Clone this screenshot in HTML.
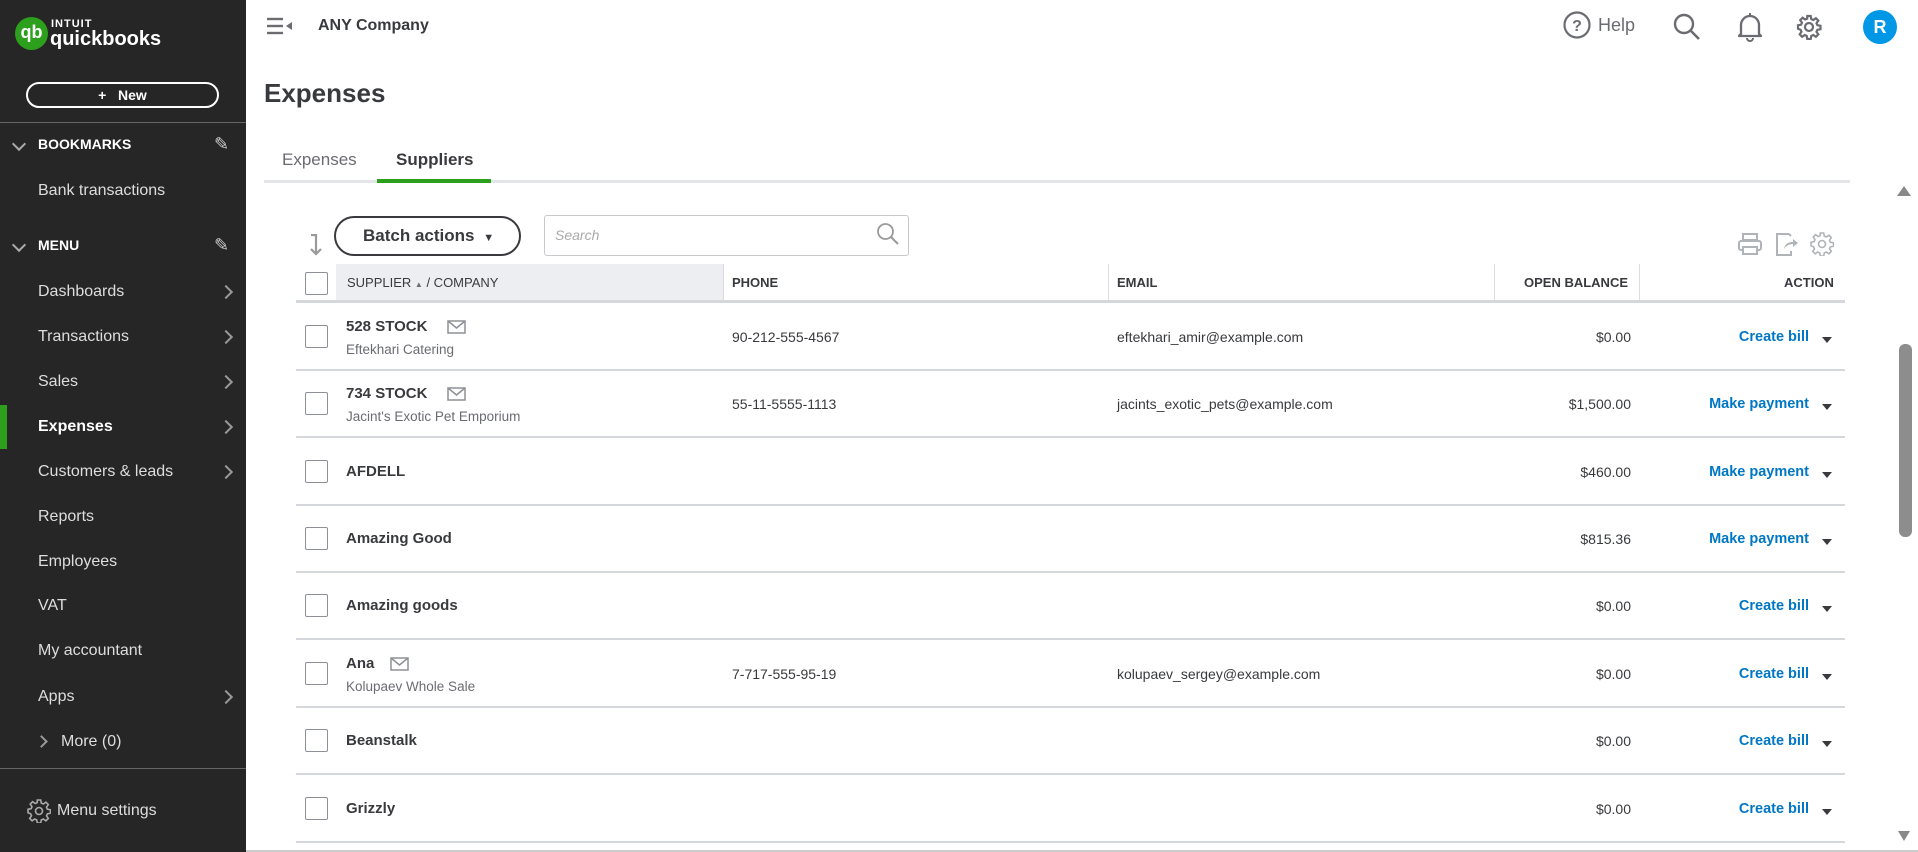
<!DOCTYPE html>
<html><head><meta charset="utf-8"><style>
*{box-sizing:border-box;margin:0;padding:0}
body{width:1918px;height:852px;overflow:hidden;background:#fff;font-family:"Liberation Sans",sans-serif;color:#393a3d;position:relative}
.sb{position:absolute;left:0;top:0;width:246px;height:852px;background:#262626;color:#e8e8e8}
.sb .it{position:absolute;left:38px;font-size:16px;color:#ddd}
.chev{position:absolute;left:221px;width:10px;height:10px;border-right:2px solid #999;border-top:2px solid #999;transform:rotate(45deg)}
.a{position:absolute}
.row{position:absolute;left:296px;width:1549px;height:68px;border-bottom:2px solid #d4d7dc}
.cb{position:absolute;left:9px;width:23px;height:23px;border:1px solid #8d9096;border-radius:2px;background:#fff}
.nm{position:absolute;left:50px;font-size:15px;font-weight:bold;color:#393a3d}
.co{position:absolute;left:50px;font-size:13.5px;color:#6b6c72}
.ph{position:absolute;left:436px;font-size:14px}
.em{position:absolute;left:821px;font-size:14px}
.bal{position:absolute;right:214px;font-size:14px;text-align:right}
.act{position:absolute;right:36px;font-size:14.5px;font-weight:bold;color:#0077c5}
.tri{position:absolute;right:13px;width:0;height:0;border-left:5px solid transparent;border-right:5px solid transparent;border-top:6px solid #393a3d}
.env{position:absolute;width:19px;height:14px}
.hd{position:absolute;top:264px;height:37px;font-size:13px;font-weight:bold;line-height:37px;color:#393a3d}
</style></head><body>
<svg width="0" height="0" style="position:absolute"><defs><path id="gear" d="M10.3 1h3.4l.6 3.1 2 .9 2.6-1.8 2.4 2.4-1.8 2.6.9 2 3.1.6v3.4l-3.1.6-.9 2 1.8 2.6-2.4 2.4-2.6-1.8-2 .9-.6 3.1h-3.4l-.6-3.1-2-.9-2.6 1.8-2.4-2.4 1.8-2.6-.9-2L1 13.7v-3.4l3.1-.6.9-2-1.8-2.6 2.4-2.4 2.6 1.8 2-.9z"/></defs></svg>
<div class="sb">
 <div class="a" style="left:15px;top:17px;width:33px;height:33px;border-radius:50%;background:#2ca01c;color:#fff;font-weight:bold;font-size:18px;text-align:center;line-height:31px">qb</div>
 <div class="a" style="left:51px;top:18px;font-size:11px;font-weight:bold;letter-spacing:1px;color:#fff">INTUIT</div>
 <div class="a" style="left:50px;top:28px;font-size:20px;font-weight:bold;color:#fff">quickbooks</div>
 <div class="a" style="left:26px;top:82px;width:193px;height:26px;border:2px solid #fff;border-radius:13px;text-align:center;font-size:14px;font-weight:bold;line-height:22px;color:#fff">+&nbsp;&nbsp;&nbsp;New</div>
 <div class="a" style="left:0;top:122px;width:246px;height:1px;background:#666"></div>
 <div class="a" style="left:14px;top:139px;width:10px;height:10px;border-right:2px solid #aaa;border-bottom:2px solid #aaa;transform:rotate(45deg)"></div>
 <div class="it" style="top:136px;font-size:14px;font-weight:bold;color:#fff">BOOKMARKS</div>
 <div class="a" style="left:214px;top:134px;font-size:18px;color:#ccc">✎</div>
 <div class="it" style="top:182px">Bank transactions</div>
 <div class="a" style="left:14px;top:240px;width:10px;height:10px;border-right:2px solid #aaa;border-bottom:2px solid #aaa;transform:rotate(45deg)"></div>
 <div class="it" style="top:237px;font-size:14px;font-weight:bold;color:#fff">MENU</div>
 <div class="a" style="left:214px;top:235px;font-size:18px;color:#ccc">✎</div>
 <div class="it" style="top:283px">Dashboards</div><div class="chev" style="top:287px"></div>
 <div class="it" style="top:328px">Transactions</div><div class="chev" style="top:332px"></div>
 <div class="it" style="top:373px">Sales</div><div class="chev" style="top:377px"></div>
 <div class="a" style="left:0;top:405px;width:7px;height:44px;background:#2ca01c"></div>
 <div class="it" style="top:418px;font-weight:bold;color:#fff">Expenses</div><div class="chev" style="top:422px"></div>
 <div class="it" style="top:463px">Customers &amp; leads</div><div class="chev" style="top:467px"></div>
 <div class="it" style="top:508px">Reports</div>
 <div class="it" style="top:553px">Employees</div>
 <div class="it" style="top:597px">VAT</div>
 <div class="it" style="top:642px">My accountant</div>
 <div class="it" style="top:688px">Apps</div><div class="chev" style="top:692px"></div>
 <div class="a" style="left:37px;top:737px;width:9px;height:9px;border-right:2px solid #999;border-top:2px solid #999;transform:rotate(45deg)"></div>
 <div class="it" style="left:61px;top:733px">More (0)</div>
 <div class="a" style="left:0;top:768px;width:246px;height:1px;background:#666"></div>
 <svg class="a" style="left:27px;top:799px" width="24" height="24"><use href="#gear" fill="none" stroke="#aaa" stroke-width="1.6"/><circle cx="12" cy="12" r="3.5" fill="none" stroke="#aaa" stroke-width="1.6"/></svg>
 <div class="it" style="left:57px;top:802px">Menu settings</div>
</div>
<svg class="a" style="left:267px;top:17px" width="26" height="18"><g stroke="#6b6c72" stroke-width="2.4"><line x1="0" y1="2" x2="16" y2="2"/><line x1="0" y1="9" x2="16" y2="9"/><line x1="0" y1="16" x2="16" y2="16"/></g><path d="M25 5 L19 9 L25 13Z" fill="#6b6c72"/></svg>
<div class="a" style="left:318px;top:17px;font-size:16px;font-weight:bold;color:#393a3d">ANY Company</div>
<svg class="a" style="left:1562px;top:10px" width="30" height="30"><circle cx="15" cy="15" r="12.5" fill="none" stroke="#6b6c72" stroke-width="2.2"/><text x="15" y="21" font-size="16" font-weight="bold" text-anchor="middle" fill="#6b6c72" font-family="Liberation Sans">?</text></svg>
<div class="a" style="left:1598px;top:15px;font-size:18px;color:#6b6c72">Help</div>
<svg class="a" style="left:1673px;top:13px" width="28" height="28"><circle cx="11" cy="11" r="9" fill="none" stroke="#6b6c72" stroke-width="2.4"/><line x1="17.5" y1="17.5" x2="26" y2="26" stroke="#6b6c72" stroke-width="2.6"/></svg>
<svg class="a" style="left:1737px;top:12px" width="26" height="30"><path d="M4 22 L4 13 A9 9 0 0 1 22 13 L22 22 L24 24 L2 24Z" fill="none" stroke="#6b6c72" stroke-width="2.3" stroke-linejoin="round"/><path d="M10 26 A3 3 0 0 0 16 26" fill="none" stroke="#6b6c72" stroke-width="2"/><line x1="13" y1="1" x2="13" y2="4" stroke="#6b6c72" stroke-width="2"/></svg>
<svg class="a" style="left:1796px;top:14px" width="26" height="26"><g transform="translate(1 1)"><use href="#gear" fill="none" stroke="#6b6c72" stroke-width="2.2"/><circle cx="12" cy="12" r="4" fill="none" stroke="#6b6c72" stroke-width="2.2"/></g></svg>
<div class="a" style="left:1863px;top:10px;width:34px;height:34px;border-radius:50%;background:#0097e6;color:#fff;font-weight:bold;font-size:18px;text-align:center;line-height:34px">R</div>
<div class="a" style="left:264px;top:78px;font-size:26px;font-weight:bold;color:#393a3d">Expenses</div>
<div class="a" style="left:282px;top:150px;font-size:17px;color:#6b6c72">Expenses</div>
<div class="a" style="left:396px;top:150px;font-size:17px;font-weight:bold;color:#393a3d">Suppliers</div>
<div class="a" style="left:264px;top:180px;width:1586px;height:3px;background:#e3e5e8"></div>
<div class="a" style="left:377px;top:179px;width:114px;height:4px;background:#2ca01c"></div>
<div class="a" style="left:1897px;top:186px;width:0;height:0;border-left:7px solid transparent;border-right:7px solid transparent;border-bottom:10px solid #888"></div>
<div class="a" style="left:1899px;top:344px;width:13px;height:193px;border-radius:6px;background:#8d8d8d"></div>
<div class="a" style="left:1898px;top:831px;width:0;height:0;border-left:6px solid transparent;border-right:6px solid transparent;border-top:10px solid #888"></div>
<svg class="a" style="left:309px;top:234px" width="14" height="22"><path d="M2 1 L7 1 L7 20 M2 15 L7 20 L12 15" fill="none" stroke="#9a9a9a" stroke-width="2.2"/></svg>
<div class="a" style="left:334px;top:216px;width:187px;height:40px;border:2px solid #393a3d;border-radius:20px;font-size:17px;font-weight:bold;line-height:36px;padding-left:27px;color:#393a3d">Batch actions <span style="font-size:11px;margin-left:4px">▼</span></div>
<div class="a" style="left:544px;top:215px;width:365px;height:41px;border:1px solid #c8c9cc;border-radius:3px;font-size:14px;font-style:italic;color:#aaa;padding:11px 10px">Search</div>
<svg class="a" style="left:876px;top:222px" width="24" height="24"><circle cx="9.5" cy="9.5" r="7.5" fill="none" stroke="#9a9a9a" stroke-width="1.8"/><line x1="15" y1="15" x2="22" y2="22" stroke="#9a9a9a" stroke-width="2"/></svg>
<svg class="a" style="left:1738px;top:233px" width="24" height="23"><rect x="5" y="1" width="14" height="6" fill="none" stroke="#b0b3b8" stroke-width="2"/><rect x="1" y="8" width="22" height="9" rx="2" fill="none" stroke="#b0b3b8" stroke-width="2"/><rect x="5" y="14" width="14" height="7" fill="#fff" stroke="#b0b3b8" stroke-width="2"/></svg>
<svg class="a" style="left:1775px;top:233px" width="24" height="23"><path d="M14 1 L2 1 L2 22 L16 22 L16 18 M14 1 L16 3" fill="none" stroke="#b0b3b8" stroke-width="2"/><path d="M9 16 Q10 9 18 9 L18 6 L23 10 L18 14 L18 11 Q12 11 9 16Z" fill="#b0b3b8"/></svg>
<svg class="a" style="left:1810px;top:232px" width="24" height="24"><use href="#gear" fill="none" stroke="#b0b3b8" stroke-width="1.6"/><circle cx="12" cy="12" r="3.5" fill="none" stroke="#b0b3b8" stroke-width="1.6"/></svg>
<div class="a" style="left:336px;top:264px;width:387px;height:37px;background:#eceef1"></div>
<div class="a" style="left:723px;top:264px;width:1px;height:37px;background:#dcdde0"></div>
<div class="a" style="left:1108px;top:264px;width:1px;height:37px;background:#dcdde0"></div>
<div class="a" style="left:1494px;top:264px;width:1px;height:37px;background:#dcdde0"></div>
<div class="a" style="left:1639px;top:264px;width:1px;height:37px;background:#dcdde0"></div>
<div class="cb" style="left:305px;top:272px"></div>
<div class="hd" style="left:347px;font-weight:normal">SUPPLIER <span style="font-size:8px;color:#6b6c72">▲</span> / COMPANY</div>
<div class="hd" style="left:732px">PHONE</div>
<div class="hd" style="left:1117px">EMAIL</div>
<div class="hd" style="left:1524px">OPEN BALANCE</div>
<div class="hd" style="left:1784px">ACTION</div>
<div class="a" style="left:296px;top:300px;width:1549px;height:3px;background:#d4d7dc"></div>

<div class="row" style="top:303px"><div class="cb" style="top:22px"></div><div class="nm" style="top:15px">528 STOCK</div><svg class="env" style="left:151px;top:17px"><rect x="1" y="1" width="17" height="12" fill="none" stroke="#8d9096" stroke-width="1.5"/><path d="M1 1 L9.5 8 L18 1" fill="none" stroke="#8d9096" stroke-width="1.5"/></svg><div class="co" style="top:39px">Eftekhari Catering</div><div class="ph" style="top:26px">90-212-555-4567</div><div class="em" style="top:26px">eftekhari_amir@example.com</div><div class="bal" style="top:26px">$0.00</div><div class="act" style="top:26px">Create bill</div><div class="tri" style="top:34px"></div></div>
<div class="row" style="top:370px"><div class="cb" style="top:22px"></div><div class="nm" style="top:15px">734 STOCK</div><svg class="env" style="left:151px;top:17px"><rect x="1" y="1" width="17" height="12" fill="none" stroke="#8d9096" stroke-width="1.5"/><path d="M1 1 L9.5 8 L18 1" fill="none" stroke="#8d9096" stroke-width="1.5"/></svg><div class="co" style="top:39px">Jacint's Exotic Pet Emporium</div><div class="ph" style="top:26px">55-11-5555-1113</div><div class="em" style="top:26px">jacints_exotic_pets@example.com</div><div class="bal" style="top:26px">$1,500.00</div><div class="act" style="top:26px">Make payment</div><div class="tri" style="top:34px"></div></div>
<div class="row" style="top:438px"><div class="cb" style="top:22px"></div><div class="nm" style="top:25px">AFDELL</div><div class="bal" style="top:26px">$460.00</div><div class="act" style="top:26px">Make payment</div><div class="tri" style="top:34px"></div></div>
<div class="row" style="top:505px"><div class="cb" style="top:22px"></div><div class="nm" style="top:25px">Amazing Good</div><div class="bal" style="top:26px">$815.36</div><div class="act" style="top:26px">Make payment</div><div class="tri" style="top:34px"></div></div>
<div class="row" style="top:572px"><div class="cb" style="top:22px"></div><div class="nm" style="top:25px">Amazing goods</div><div class="bal" style="top:26px">$0.00</div><div class="act" style="top:26px">Create bill</div><div class="tri" style="top:34px"></div></div>
<div class="row" style="top:640px"><div class="cb" style="top:22px"></div><div class="nm" style="top:15px">Ana</div><svg class="env" style="left:94px;top:17px"><rect x="1" y="1" width="17" height="12" fill="none" stroke="#8d9096" stroke-width="1.5"/><path d="M1 1 L9.5 8 L18 1" fill="none" stroke="#8d9096" stroke-width="1.5"/></svg><div class="co" style="top:39px">Kolupaev Whole Sale</div><div class="ph" style="top:26px">7-717-555-95-19</div><div class="em" style="top:26px">kolupaev_sergey@example.com</div><div class="bal" style="top:26px">$0.00</div><div class="act" style="top:26px">Create bill</div><div class="tri" style="top:34px"></div></div>
<div class="row" style="top:707px"><div class="cb" style="top:22px"></div><div class="nm" style="top:25px">Beanstalk</div><div class="bal" style="top:26px">$0.00</div><div class="act" style="top:26px">Create bill</div><div class="tri" style="top:34px"></div></div>
<div class="row" style="top:775px"><div class="cb" style="top:22px"></div><div class="nm" style="top:25px">Grizzly</div><div class="bal" style="top:26px">$0.00</div><div class="act" style="top:26px">Create bill</div><div class="tri" style="top:34px"></div></div>
<div class="a" style="left:246px;top:850px;width:1672px;height:2px;background:#ccc"></div>
</body></html>
